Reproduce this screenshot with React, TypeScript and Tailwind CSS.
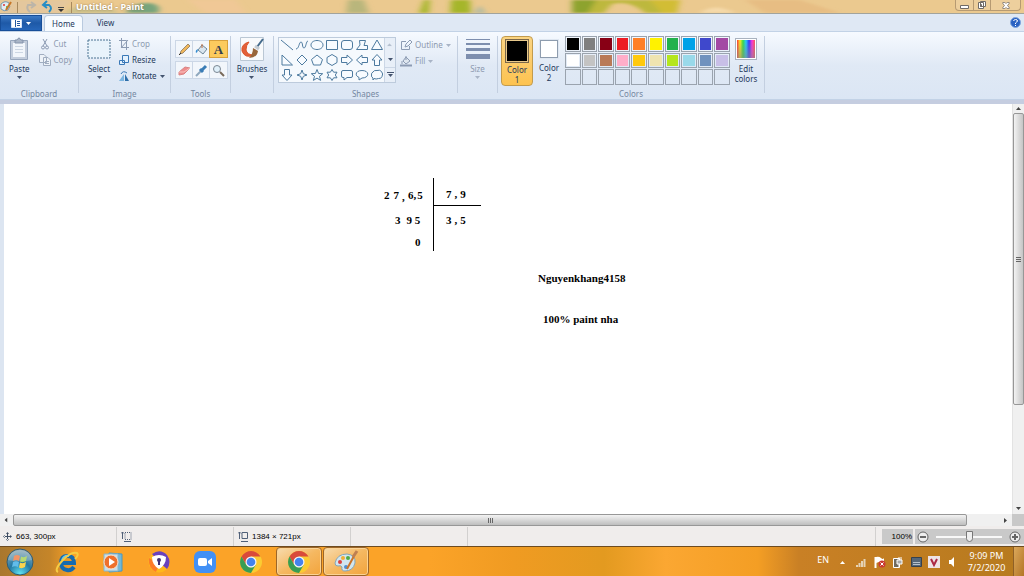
import type { ReactNode } from 'react';

const swatches = [
  '#000000', '#7f7f7f', '#880015', '#ed1c24', '#ff7f27', '#fff200', '#22b14c', '#00a2e8', '#3f48cc', '#a349a4',
  '#ffffff', '#c3c3c3', '#b97a57', '#ffaec9', '#ffc90e', '#efe4b0', '#b5e61d', '#99d9ea', '#7092be', '#c8bfe7',
];

// every outline is drawn on a 14x14 grid
const shapes = [
  { name: 'Line', d: 'M1 2L13 12' },
  { name: 'Curve', d: 'M1 11C4 11 4 4 6 4C8 4 7 10 9 10C11 10 11 3 13 3' },
  { name: 'Oval', d: 'M7 2.5C10.5 2.5 13 4.5 13 7S10.5 11.5 7 11.5S1 9.5 1 7S3.5 2.5 7 2.5Z' },
  { name: 'Rectangle', d: 'M1.5 2.5H12.5V11.5H1.5Z' },
  { name: 'Rounded rectangle', d: 'M4 2.5H10Q12.5 2.5 12.5 5V9Q12.5 11.5 10 11.5H4Q1.5 11.5 1.5 9V5Q1.5 2.5 4 2.5Z' },
  { name: 'Polygon', d: 'M4.5 2.5H10.5L9 7.5H12.5V11.5H1.5L5 7Z' },
  { name: 'Triangle', d: 'M7 2L12.5 11.5H1.5Z' },
  { name: 'Right triangle', d: 'M2 2V12H12.5Z' },
  { name: 'Diamond', d: 'M7 2L12 7L7 12L2 7Z' },
  { name: 'Pentagon', d: 'M7 2L12.5 6.5L10.5 12H3.5L1.5 6.5Z' },
  { name: 'Hexagon', d: 'M7 1.5L12 4.5V9.5L7 12.5L2 9.5V4.5Z' },
  { name: 'Right arrow', d: 'M1.5 4.5H7V2L12.5 7L7 12V9.5H1.5Z' },
  { name: 'Left arrow', d: 'M12.5 4.5H7V2L1.5 7L7 12V9.5H12.5Z' },
  { name: 'Up arrow', d: 'M4.5 12.5V7H2L7 1.5L12 7H9.5V12.5Z' },
  { name: 'Down arrow', d: 'M4.5 1.5V7H2L7 12.5L12 7H9.5V1.5Z' },
  { name: 'Four-point star', d: 'M7 2L8.3 5.7L12 7L8.3 8.3L7 12L5.7 8.3L2 7L5.7 5.7Z' },
  { name: 'Five-point star', d: 'M7 1.5L8.6 5.5L12.7 5.7L9.5 8.3L10.6 12.4L7 10.1L3.4 12.4L4.5 8.3L1.3 5.7L5.4 5.5Z' },
  { name: 'Six-point star', d: 'M7 1.5L8.6 4.2H12L10.3 7L12 9.8H8.6L7 12.5L5.4 9.8H2L3.7 7L2 4.2H5.4Z' },
  { name: 'Rounded callout', d: 'M3 2.5H11Q12.5 2.5 12.5 4V8Q12.5 9.5 11 9.5H7L4 12V9.5H3Q1.5 9.5 1.5 8V4Q1.5 2.5 3 2.5Z' },
  { name: 'Oval callout', d: 'M7 2.5C10.5 2.5 12.8 4 12.8 6.2S10.5 10 7 10L4 12V9.4C2.3 8.7 1.2 7.6 1.2 6.2C1.2 4 3.5 2.5 7 2.5Z' },
  { name: 'Cloud callout', d: 'M3 4Q4 2 7 2.5Q10 1.5 11.5 3.5Q13.5 6 12 8.5Q11 11 8.5 10.5Q6 11.5 4 10.5L3 12V10Q1 9 1.5 7Q1 5 3 4Z' },
];

function Arrow({ className = 'fill-[#44546f]' }: { className?: string }) {
  return (
    <svg width="5" height="3" viewBox="0 0 5 3" className={className}>
      <path d="M0 0H5L2.5 3Z" />
    </svg>
  );
}

function Group({ label, className, children }: { label?: string; className: string; children: ReactNode }) {
  return (
    <section className={`flex shrink-0 flex-col border-r border-[#c3cfe0] ${className}`}>
      <div className="flex h-[52px] shrink-0">{children}</div>
      <h2 className="h-3 text-center leading-3 text-[#7486a0]">{label}</h2>
    </section>
  );
}

function BigButton({ icon, label, muted }: { icon: ReactNode; label: string; muted?: boolean }) {
  return (
    <button className={`flex flex-col items-center self-start leading-[10px] ${muted ? 'text-[#8d9ab0]' : ''}`}>
      <span className="mb-[2px] flex h-[26px] items-center">{icon}</span>
      {label}
      <span className="mt-[2px] flex"><Arrow className={muted ? 'fill-[#a9b4c6]' : 'fill-[#44546f]'} /></span>
    </button>
  );
}

function SmallButton({ icon, label, muted, arrow }: { icon: ReactNode; label: string; muted?: boolean; arrow?: boolean }) {
  return (
    <button className={`flex h-4 items-center gap-[3px] ${muted ? 'text-[#8d9ab0]' : ''}`}>
      {icon}
      {label}
      {arrow && <Arrow className={muted ? 'fill-[#a9b4c6]' : 'fill-[#44546f]'} />}
    </button>
  );
}

function Tool({ name, active, children }: { name: string; active?: boolean; children: ReactNode }) {
  return (
    <button aria-label={name} className={`flex h-4 w-[17px] items-center justify-center ${active ? 'bg-[#fccb5e] outline outline-[#d8a13c]' : 'border-r border-[#ccd7e6] last:border-r-0'}`}>
      <svg width="13" height="13" viewBox="0 0 13 13" fill="none">{children}</svg>
    </button>
  );
}

function TitleBar() {
  return (
    <header className="relative flex h-[13px] overflow-hidden bg-[#ebc98f] text-[9px]">
      <svg className="absolute inset-0 h-full w-full" viewBox="0 0 1024 13" preserveAspectRatio="none">
        <defs>
          <filter id="soft" x="-20%" y="-50%" width="140%" height="200%"><feGaussianBlur stdDeviation="3 1" /></filter>
        </defs>
        <g filter="url(#soft)">
          <path d="M0 0H72L60 13H0Z" fill="#e4c79d" />
          <path d="M126 13Q132 2 150 3Q162 5 158 13Z" fill="#77a47c" />
          <path d="M64 13Q74 4 96 6Q116 8 118 13Z" fill="#ccc18c" />
          <path d="M188 0H235L246 13H205Z" fill="#f0c896" />
          <path d="M348 0H364L369 13H346Z" fill="#b9b67b" />
          <path d="M424 0H430L429 13H419Z" fill="#a8b72d" />
          <path d="M451 0H470L471 13H450Z" fill="#a5b62c" />
          <path d="M474 13L480 5L486 13Z" fill="#b5bba0" />
          <path d="M572 0H680L677 13H645Q630 0 612 4L604 13H572Z" fill="#bdb83c" />
          <path d="M572 0H596L588 13H572Z" fill="#8da32f" />
          <path d="M650 0H680L676 13H662Z" fill="#d2bd36" />
          <path d="M700 13Q715 2 735 13Z" fill="#f5d9a9" />
          <path d="M745 0H800L840 13H765Z" fill="#e7bd83" />
        </g>
      </svg>
      <div className="relative flex h-full flex-1 items-center">
        <svg width="76" height="13" viewBox="0 0 76 13" fill="none">
          <path d="M1 4Q5 0 9 3Q11 7 8 10Q4 12 1 9Z" fill="#e2ecf1" stroke="#7998aa" />
          <circle cx="4" cy="5" r="1" fill="#d33" /><circle cx="7" cy="7" r="1" fill="#3b3" />
          <path d="M6 10L11 2" stroke="#c77728" strokeWidth="2" />
          <path d="M17.5 2V13M71.5 2V13" stroke="#a7895d" />
          <path d="M34 5H28Q26 9 30 12M31 2L35 5L31 8" stroke="#bcb5a8" strokeWidth="2" />
          <path d="M43 5H49Q53 8 49 12M47 1L43 5L47 8" stroke="#278dc5" strokeWidth="2" />
          <path d="M58 7.5H64" stroke="#444" /><path d="M58 9H64L61 12Z" fill="#333" />
        </svg>
        <h1 className="font-bold leading-[13px] text-white [text-shadow:0_0_2px_#987345]">Untitled - Paint</h1>
      </div>
      <div className="relative mr-[3px] flex h-[11px] rounded-b-sm border border-t-0 border-[#b69a72] bg-[#edcf9d]">
        <button aria-label="Minimize" className="flex w-[18px] items-center justify-center border-r border-[#b69a72]">
          <svg width="9" height="7" viewBox="0 0 9 7"><path d="M.5 3.5H8.5V6.5H.5Z" fill="#fff" stroke="#706b67" /></svg>
        </button>
        <button aria-label="Restore" className="flex w-[17px] items-center justify-center border-r border-[#b69a72]">
          <svg width="8" height="8" viewBox="0 0 8 8" fill="#fff" stroke="#706b67"><path d="M2.5 .5H7.5V5.500H2.5ZM.5 1.500H5.500V7.500H.5ZM2.5 3.500H3.500V5.500H2.5Z" /></svg>
        </button>
        <button aria-label="Close" className="flex w-[29px] items-center justify-center">
          <svg width="8" height="7" viewBox="0 0 9 9"><path d="M.5 .5H3L4.5 2L6 .5H8.5V2L6.5 4.5L8.5 7V8.5H6L4.5 7L3 8.5H.5V7L2.5 4.5L.5 2Z" fill="#fff" stroke="#706b67" /></svg>
        </button>
      </div>
    </header>
  );
}

function Ribbon() {
  return (
    <div className="flex h-[69px] overflow-hidden border-y border-[#c2d2e6] bg-linear-to-b from-[#f6faff] via-[#e0e9f5] to-[#dbe6f4] pt-1 pb-[6px] text-[8px] text-[#1e395b]">
      <Group label="Clipboard" className="w-[79px]">
        <div className="flex gap-[9px] pl-[9px]">
          <BigButton
            label="Paste"
            icon={
              <svg width="20" height="24" viewBox="0 0 20 24" fill="none">
                <path d="M1.5 3.5H18.5V22.5H1.5Z" fill="#c3cddc" stroke="#98a7bd" />
                <path d="M4 6H16V20H4Z" fill="#f2f6fb" />
                <path d="M6 9.5H14M6 12.5H14M6 15.5H14" stroke="#ccd6e3" />
                <path d="M6 3H8Q10 -1 12 3H14V6H6Z" fill="#a9b5c7" stroke="#8493ab" />
              </svg>
            }
          />
          <div className="flex flex-col">
            <SmallButton muted label="Cut" icon={
              <svg width="12" height="12" viewBox="0 0 12 12" fill="none" stroke="#8c9bb3"><path d="M4 1L8 8M8 1L4 8" /><circle cx="4" cy="9.500" r="1.500" /><circle cx="8" cy="9.500" r="1.500" /></svg>
            } />
            <SmallButton muted label="Copy" icon={
              <svg width="12" height="12" viewBox="0 0 12 12" fill="#edf2f8" stroke="#a0adc0"><path d="M.5 .5H5L7.5 3V8.5H.5ZM4.5 3.5H9L11.5 6V11.5H4.5ZM6 7.5H10M6 9.5H10" /></svg>
            } />
          </div>
        </div>
      </Group>

      <Group label="Image" className="w-[92px]">
        <div className="flex gap-2 pl-[8px]">
          <BigButton label="Select" icon={
            <svg width="24" height="20" viewBox="0 0 24 20"><path d="M1 1H23V19H1Z" fill="#e8f3fb" stroke="#4a7291" strokeDasharray="2 1" /></svg>
          } />
          <div className="flex flex-col">
            <SmallButton muted label="Crop" icon={
              <svg width="10" height="12" viewBox="0 0 10 12" fill="none" stroke="#8c9bb3"><path d="M2.5 0V9.5H10M0 2.5H7.5V12M2 10L9 2" /></svg>
            } />
            <SmallButton label="Resize" icon={
              <svg width="10" height="12" viewBox="0 0 10 12" fill="#e4f1fd" stroke="#3a78b7"><path d="M3.5 1.5H9.5V8.5H3.5ZM.5 6.5H5.5V10.5H.5Z" /></svg>
            } />
            <SmallButton arrow label="Rotate" icon={
              <svg width="10" height="12" viewBox="0 0 10 12"><path d="M0 11H5V4Z" fill="#7cb5e0" /><path d="M6 4V11H10Z" fill="#2d6ea9" /><path d="M2 4Q4 0 8 3" fill="none" stroke="#3a78b7" /></svg>
            } />
          </div>
        </div>
      </Group>

      <Group label="Tools" className="w-[60px]">
        <div className="flex flex-col gap-[3px] pl-1 pt-1">
          <div className="flex border border-[#ccd7e6] bg-[#f2f6fb]">
            <Tool name="Pencil"><path d="M2 11L3 8L10 1L12 3L5 10Z" fill="#f0b75b" stroke="#a08a6b" /><path d="M1 12L3 10" stroke="#333" /></Tool>
            <Tool name="Fill with color"><path d="M3 7L7 2L12 6L8 11Z" fill="#d9e5ef" stroke="#6f8799" /><path d="M7 5V1" stroke="#c56f3e" /><path d="M3 6Q0 7 1 10Q3 9 3 6Z" fill="#318bd0" /></Tool>
            <Tool name="Text" active><text x="6.5" y="11" textAnchor="middle" className="fill-[#333e4f] font-['Liberation_Serif',serif] text-[13px] font-bold">A</text></Tool>
          </div>
          <div className="flex border border-[#ccd7e6] bg-[#f2f6fb]">
            <Tool name="Eraser"><path d="M1 8L7 3L12 4L6 10L1 11Z" fill="#ee8d8d" stroke="#d98484" /><path d="M1 8L6 8L12 4" stroke="#f8c3be" /></Tool>
            <Tool name="Color picker"><path d="M1 12L7 6" stroke="#8fa8bd" strokeWidth="2" /><path d="M5 5L8 8M7 6L11 2" stroke="#3a7cb5" strokeWidth="3" /></Tool>
            <Tool name="Magnifier"><circle cx="5" cy="5" r="3.5" fill="#e0f0fa" stroke="#7b8792" /><path d="M8 8L12 12" stroke="#786959" strokeWidth="2" /></Tool>
          </div>
        </div>
      </Group>

      <Group className="w-[43px]">
        <div className="flex flex-1 justify-center">
          <BigButton label="Brushes" icon={
            <svg width="24" height="24" viewBox="0 0 24 24" fill="none">
              <path d="M.5 .5H23.5V23.5H.5Z" fill="#f8fafc" stroke="#bac7d4" />
              <path d="M9 5Q1 7 2 14Q5 22 14 18Q7 18 6 13Q6 8 9 5Z" fill="#e2603a" stroke="#dc5429" />
              <path d="M17 10L23 2" stroke="#446b8c" strokeWidth="2" />
              <path d="M15 9L19 12" stroke="#c5ccd2" strokeWidth="3" />
              <path d="M13 11L18 14Q17 21 9 21Q13 17 13 11Z" fill="#97663b" />
            </svg>
          } />
        </div>
      </Group>

      <Group label="Shapes" className="w-[184px]">
        <div className="flex gap-1 pl-1 pt-px">
          <div className="flex h-[46px] w-[118px] border border-[#bdcbdc] bg-[#f5f9fd]">
            <div className="grid flex-1 grid-cols-7">
              {shapes.map((s) => (
                <button key={s.name} aria-label={s.name} className="flex items-center justify-center">
                  <svg width="14" height="14" viewBox="0 0 14 14" fill="#f7fbff" stroke="#4d7a9f"><path d={s.d} /></svg>
                </button>
              ))}
            </div>
            <div className="flex w-[11px] flex-col border-l border-[#ccd7e6] bg-[#e8eff8]">
              <button aria-label="Scroll shapes up" className="flex flex-1 rotate-180 items-center justify-center"><Arrow className="fill-[#b5c0cf]" /></button>
              <button aria-label="Scroll shapes down" className="flex flex-1 items-center justify-center"><Arrow /></button>
              <button aria-label="More shapes" className="flex flex-1 flex-col items-center justify-center gap-px border-t border-[#ccd7e6]"><span className="h-px w-[7px] bg-[#44546f]" /><Arrow /></button>
            </div>
          </div>
          <div className="flex flex-col">
            <SmallButton muted arrow label="Outline" icon={
              <svg width="12" height="12" viewBox="0 0 12 12" fill="none" stroke="#8c9bb3"><path d="M6 2.5H1.5V10.5H9.5V7M5 8L6 5L10 1L12 3L8 7Z" /></svg>
            } />
            <SmallButton muted arrow label="Fill" icon={
              <svg width="12" height="12" viewBox="0 0 12 12" fill="#dee6ef" stroke="#8c9bb3"><path d="M3 6L6 2L10 6L6 9Z" /><path d="M6 5V1M2 6V9" /><path d="M0 10.5H12" strokeWidth="2" /></svg>
            } />
          </div>
        </div>
      </Group>

      <Group className="w-[40px]">
        <div className="flex flex-1 justify-center">
          <BigButton muted label="Size" icon={
            <svg width="24" height="22" viewBox="0 0 24 22" fill="#7d8eae"><path d="M0 1H24V2H0ZM0 5H24V7H0ZM0 10H24V13H0ZM0 16H24V21H0Z" /></svg>
          } />
        </div>
      </Group>

      <Group label="Colors" className="w-[267px]">
        <div className="flex items-start pl-[3px] leading-[10px]">
          <button className="flex h-[50px] w-8 flex-col items-center rounded-sm border border-[#c29b4d] bg-linear-to-b from-[#fbd482] to-[#fdc34f] pt-[2px]">
            <span className="mb-[2px] flex size-6 border border-[#7b684a] bg-[#e8c98c] p-px"><span className="flex-1 bg-black" /></span>
            Color<br />1
          </button>
          <button className="flex w-8 flex-col items-center pt-1">
            <span className="mb-[5px] size-[18px] border border-[#8e9cae] bg-white outline outline-[#dfe7f1]" />
            Color<br />2
          </button>
          <div className="grid h-[49px] w-[165px] grid-cols-10 grid-rows-3 gap-px">
            {Array.from({ length: 30 }, (_, i) => (
              <button key={i} aria-label={swatches[i] ?? 'Empty custom color'} className="border border-[#9aa3ae] p-px">
                <span className="block h-full" style={{ backgroundColor: swatches[i] }} />
              </button>
            ))}
          </div>
          <button className="flex w-8 flex-col items-center pt-[2px]">
            <span className="mb-1 size-[22px] border border-[#a9b2bf] bg-white p-px">
              <span className="relative block h-full bg-[linear-gradient(90deg,#f33,#fe2,#3d4,#2cf,#33f,#f3d,#f55)]">
                <span className="absolute inset-0 bg-linear-to-b from-transparent to-[#888]/60" />
              </span>
            </span>
            Edit<br />colors
          </button>
        </div>
      </Group>
    </div>
  );
}

function Canvas() {
  return (
    <main className="flex flex-1 border-t-4 border-[#c5cde0]">
      <div className="w-1 bg-[#dce5f1]" />
      <div className="relative min-h-[240px] flex-1 overflow-hidden bg-white font-['Liberation_Serif',serif] text-[11px] font-bold leading-3 text-black">
        {/* long division sheet */}
        <p className="absolute left-[380px] top-[85px] flex gap-1"><span>2</span><span>7</span></p>
        <p className="absolute left-[398px] top-[87px]">,</p>
        <p className="absolute left-[404px] top-[85px] flex gap-px"><span>6,</span><span>5</span></p>
        <p className="absolute left-[442px] top-[84px] flex gap-[3px]"><span>7</span><span>,</span><span>9</span></p>
        <p className="absolute left-[391px] top-[110px] flex gap-[6px]"><span>3</span><span>9 5</span></p>
        <p className="absolute left-[442px] top-[110px] flex gap-[3px]"><span>3</span><span>,</span><span>5</span></p>
        <p className="absolute left-[411px] top-[132px]">0</p>
        <div className="absolute left-[429px] top-[74px] h-[73px] w-px bg-black" />
        <div className="absolute left-[429px] top-[101px] h-px w-[48px] bg-black" />
        <p className="absolute left-[534px] top-[168px]">Nguyenkhang4158</p>
        <p className="absolute left-[539px] top-[209px]">100% paint nha</p>
      </div>
      <div className="flex w-3 flex-col border-l border-[#e3e3e3] bg-[#f0f0f0]">
        <button aria-label="Scroll up" className="flex h-[9px] rotate-180 items-center justify-center"><Arrow className="fill-[#444]" /></button>
        <div className="flex flex-[3] items-center justify-center rounded-xs border border-[#979797] bg-linear-to-r from-[#f3f3f3] to-[#c5c5c5]">
          <svg width="5" height="7" viewBox="0 0 5 7" stroke="#666"><path d="M0 1.500H5M0 3.5H5M0 5.500H5" /></svg>
        </div>
        <div className="flex-1" />
        <button aria-label="Scroll down" className="flex h-3 items-center justify-center"><Arrow className="fill-[#444]" /></button>
      </div>
    </main>
  );
}

function HorizontalScroll() {
  return (
    <div className="flex h-3 bg-[#f0f0f0]">
      <button aria-label="Scroll left" className="flex w-[13px] rotate-90 items-center justify-center"><Arrow className="fill-[#444]" /></button>
      <div className="flex flex-1 items-center justify-center rounded-xs border border-[#979797] bg-linear-to-b from-[#f3f3f3] to-[#bebebe]">
        <svg width="7" height="5" viewBox="0 0 7 5" stroke="#666"><path d="M1.500 0V5M3.5 0V5M5.500 0V5" /></svg>
      </div>
      <button aria-label="Scroll right" className="flex w-[45px] items-center justify-end pr-1"><span className="flex -rotate-90"><Arrow className="fill-[#444]" /></span></button>
      <div className="w-3 bg-[#c8c8c8]" />
    </div>
  );
}

function StatusBar() {
  return (
    <footer className="flex h-5 items-stretch bg-[#f0edec] pt-px font-['Liberation_Sans',sans-serif] text-[8px] text-black">
      <div className="flex w-[117px] items-center gap-1 border-r border-[#d2d0cf] pl-[3px]">
        <svg width="9" height="9" viewBox="0 0 9 9" fill="#3f4e64"><path d="M4 1H5V4H8V5H5V8H4V5H1V4H4ZM3 2L4.500 0L6 2ZM3 7L4.500 9L6 7ZM2 3L0 4.500L2 6ZM7 3L9 4.500L7 6Z" /></svg>
        663, 300px
      </div>
      <div className="flex w-[117px] items-center border-r border-[#d2d0cf] pl-1">
        <svg width="11" height="11" viewBox="0 0 11 11" fill="none" stroke="#506078"><path d="M1.500 8V1M0 2.500L1.500 1L3 2.500M3 10.500H10" /><path d="M4 1.500H10V8.500H4Z" strokeDasharray="1 1" /></svg>
      </div>
      <div className="flex w-[117px] items-center gap-[3px] border-r border-[#d2d0cf] pl-1">
        <svg width="11" height="11" viewBox="0 0 11 11" fill="none" stroke="#506078"><path d="M1.500 8V1M0 2.500L1.500 1L3 2.500M4 1.500H9.500V7.500H4ZM3 10.500H10" /></svg>
        1384 × 721px
      </div>
      <div className="w-[117px] border-r border-[#d2d0cf]" />
      <div className="flex-1 border-r border-[#d2d0cf]" />
      <div className="ml-[6px] flex w-[142px] items-center bg-[#f0edec]">
        <span className="flex h-[15px] w-[31px] shrink-0 items-center justify-end bg-[#c9c9c9] pr-px">100%</span>
        <div className="ml-[2px] flex h-[15px] min-w-0 flex-1 items-center bg-[#c9c9c9] pl-[2px]">
          <button aria-label="Zoom out" className="shrink-0"><svg width="12" height="12" viewBox="0 0 12 12" fill="#eee" stroke="#666"><circle cx="6" cy="6" r="5" /><path d="M3 6H9" strokeWidth="2" /></svg></button>
          <input
            type="range"
            aria-label="Zoom"
            defaultValue={50}
            className="mx-[7px] h-3 min-w-0 flex-1 appearance-none bg-[linear-gradient(#f8f8f8,#f8f8f8)] bg-[length:100%_2px] bg-center bg-no-repeat [&::-webkit-slider-thumb]:h-[11px] [&::-webkit-slider-thumb]:w-[7px] [&::-webkit-slider-thumb]:appearance-none [&::-webkit-slider-thumb]:rounded-b-sm [&::-webkit-slider-thumb]:border [&::-webkit-slider-thumb]:border-[#777] [&::-webkit-slider-thumb]:bg-[#eee]"
          />
          <button aria-label="Zoom in" className="mr-[3px] shrink-0"><svg width="12" height="12" viewBox="0 0 12 12" fill="#eee" stroke="#666"><circle cx="6" cy="6" r="5" /><path d="M3 6H9M6 3V9" strokeWidth="2" /></svg></button>
        </div>
      </div>
    </footer>
  );
}

function ChromeIcon() {
  return (
    <svg width="24" height="24" viewBox="0 0 24 24">
      <circle cx="12" cy="12" r="11" fill="#fbcb32" />
      <path d="M2.500 6.500A11 11 0 0 1 21.500 6.500H12L7.200 14.800Z" fill="#d94a3a" />
      <path d="M2.500 6.500A11 11 0 0 0 12 23L16.800 14.800L12 17.500L7.200 14.800Z" fill="#389d54" />
      <circle cx="12" cy="12" r="5.500" fill="#f5f5f5" />
      <circle cx="12" cy="12" r="4.300" fill="#4483ee" />
    </svg>
  );
}

function TaskButton({ name, open, children }: { name: string; open?: boolean; children: ReactNode }) {
  return (
    <button aria-label={name} className={`flex w-[46px] items-center justify-center ${open ? 'rounded-sm border border-[#9d6629] bg-linear-to-br from-[#f7dcae] via-[#f5b861] to-[#f2a43a] shadow-[inset_0_0_0_1px_#fbd393]' : ''}`}>
      {children}
    </button>
  );
}

function Taskbar() {
  return (
    <nav className="flex h-[30px] overflow-hidden border-t border-[#6d4b20] bg-[linear-gradient(90deg,#a9772d_0,#c58529_50px,#fba328_75px,#fba328_42%,#f09b22_50%,#e39a20_59%,#fba732_65%,#f49e24_74%,#c98025_78%,#b67a1e)]">
      <button aria-label="Start" className="flex w-[44px] justify-center pr-1 pt-px">
        <svg width="28" height="28" viewBox="0 0 28 28">
          <defs>
            <radialGradient id="orb" cx=".5" cy=".95" r=".9"><stop offset="0" stopColor="#5fe4f3" /><stop offset=".5" stopColor="#2479a4" /><stop offset="1" stopColor="#8ba7b3" /></radialGradient>
          </defs>
          <circle cx="14" cy="14" r="13" fill="url(#orb)" stroke="#315b70" />
          <path d="M8 8Q11 6 14 8L13 13Q10 11 7 13Z" fill="#f1763c" />
          <path d="M15 8.500Q18 10 21 8L20 13Q17 15 14 13.500Z" fill="#a3cf4c" />
          <path d="M7 14Q10 12.500 13 14L12 19Q9 17.500 6 19Z" fill="#61bcea" />
          <path d="M14 14.500Q17 16 20 14L19 19Q16 21 13 19.500Z" fill="#fdd34e" />
          <path d="M2 12Q4 2 14 2T26 12Q14 15 2 12Z" fill="#fff" opacity=".22" />
        </svg>
      </button>
      <TaskButton name="Internet Explorer">
        <svg width="24" height="24" viewBox="0 0 24 24" fill="none">
          <path d="M19 17Q16 21 12 20Q6 19 6 13Q6 6 12.500 6Q19 6 19 13H8" stroke="#176bae" strokeWidth="4" />
          <path d="M7 10Q9 5 14 6" stroke="#6ac6ef" strokeWidth="2" />
          <path d="M3 22Q-1 20 7 11Q16 1 22 3Q24 5 20 9" stroke="#f6cc43" strokeWidth="2" />
        </svg>
      </TaskButton>
      <TaskButton name="Media Player">
        <svg width="22" height="22" viewBox="0 0 22 22">
          <path d="M7 2L20 3V20L7 21Z" fill="#71b8d8" stroke="#4d97ba" /><path d="M2 3H16V20H2Z" fill="#c5dfeb" stroke="#8ab4c8" />
          <circle cx="9" cy="11" r="7" fill="#ee702b" stroke="#fae2cd" /><path d="M7 7L13 11L7 15Z" fill="#fff" />
        </svg>
      </TaskButton>
      <TaskButton name="Secure Browser">
        <svg width="24" height="24" viewBox="0 0 24 24">
          <circle cx="12" cy="12" r="10.500" fill="#ffb81c" />
          <path d="M5 4Q13 -2 20 5Q25 12 20 19L12 12Z" fill="#6942bd" />
          <path d="M2 8Q1 18 9 22L12 14Z" fill="#fd7b2a" />
          <path d="M5 7Q12 3 19 7Q19 15 12 19Q5 15 5 7Z" fill="#fff" />
          <circle cx="12" cy="10" r="2" fill="#403178" /><path d="M11 10H13V15H11Z" fill="#403178" />
        </svg>
      </TaskButton>
      <TaskButton name="Zoom">
        <svg width="24" height="24" viewBox="0 0 24 24" fill="#fff"><rect x="1" y="1" width="22" height="22" rx="6" fill="#4290f5" /><rect x="5" y="8" width="9" height="8" rx="2" /><path d="M15 11L19 8V16L15 13Z" /></svg>
      </TaskButton>
      <TaskButton name="Chrome"><ChromeIcon /></TaskButton>
      <div className="flex gap-px pl-[2px]">
        <TaskButton name="Chrome window" open><ChromeIcon /></TaskButton>
        <TaskButton name="Paint window" open>
          <svg width="26" height="24" viewBox="0 0 26 24">
            <path d="M2 13Q4 4 14 4Q23 5 22 13Q20 21 12 21Q8 21 9 17Q8 15 5 16Q2 16 2 13Z" fill="#d2e6ef" stroke="#84a6b9" />
            <circle cx="7" cy="12" r="2" fill="#db4141" /><circle cx="10" cy="8" r="2" fill="#f1ae35" /><circle cx="15" cy="8" r="2" fill="#52aa46" /><circle cx="13" cy="17" r="2" fill="#4e8ed2" />
            <path d="M14 19L21 6" stroke="#cc7427" strokeWidth="2" /><path d="M20 7L24 1" stroke="#bf8052" strokeWidth="3" />
          </svg>
        </TaskButton>
      </div>
      <div className="ml-auto flex items-center text-[9px] text-white">
        <span className="mr-[10px] pb-1">EN</span>
        <svg width="120" height="14" viewBox="0 0 120 14" fill="none">
          <path d="M1 9H6L3.500 6Z" fill="#fff" />
          <path d="M18 12V10M20.500 12V8M23 12V6M25.500 12V4" stroke="#e5d3b6" strokeWidth="2" />
          <path d="M36.500 2V13" stroke="#fff" strokeWidth="2" /><path d="M37 2Q40 1 42 3T45 3V8Q42 9 40 7L37 8Z" fill="#fff" /><circle cx="43" cy="9" r="3.500" fill="#cb3a32" /><path d="M41.500 7.500L44.500 10.500M44.500 7.500L41.500 10.500" stroke="#fff" />
          <path d="M54.500 3.500H60.500V12.500H54.500Z" fill="#706a60" stroke="#fff" /><path d="M58 5H63V9H58ZM60 9V12M60 2V5M62 2V5" stroke="#fff" fill="#aaa" />
          <path d="M72.500 2.500H82.500V11.500H72.500Z" fill="#566779" stroke="#35414e" /><path d="M74 7.500H81M74 9.500H81" stroke="#b6c1cb" />
          <path d="M89 1H101V13H89Z" fill="#eee3e6" /><path d="M92 4L95 10L98 4" stroke="#ac2946" strokeWidth="2" />
          <path d="M110 5H112L115 2V12L112 9H110Z" fill="#fff" />
        </svg>
        <time className="w-[54px] pl-px text-center leading-3">9:09 PM<br />7/2/2020</time>
        <button aria-label="Show desktop" className="h-full w-[11px] border-l border-[#8f6026] bg-linear-to-br from-[#dba85a] to-[#b37523]" />
      </div>
    </nav>
  );
}

export default function App() {
  return (
    <div className="flex min-h-screen flex-col overflow-hidden bg-[#dfe8f4] font-['Noto_Sans',sans-serif]">
      <TitleBar />
      <div className="flex h-[18px] border-t border-[#a2a39b] bg-[#dfe8f4] text-[8px] text-[#1e395b]">
        <button aria-label="Paint menu" className="mt-px flex w-[42px] items-center justify-center gap-1 border border-[#174e99] bg-linear-to-b from-[#3c7ac5] via-[#1e59a7] to-[#2666b9]">
          <svg width="11" height="9" viewBox="0 0 11 9"><path d="M.5 .5H10.500V8.500H.5Z" fill="#fff" stroke="#d4e5fa" /><path d="M4.500 1V8M6 2.500H9M6 4.500H9M6 6.500H9" stroke="#2459a1" /></svg>
          <Arrow className="fill-white" />
        </button>
        <button className="mt-px ml-[2px] w-[39px] rounded-t-sm border border-b-0 border-[#b9cadf] bg-[#f7fbff]">Home</button>
        <button className="mt-px w-[45px]">View</button>
        <button aria-label="Help" className="ml-auto mr-[3px]">
          <svg width="11" height="11" viewBox="0 0 11 11" fill="none"><circle cx="5.500" cy="5.500" r="5" fill="#2a62c2" stroke="#80a6df" /><path d="M3.500 4Q4 2.500 5.500 2.500Q7.500 2.500 7.500 4Q7 5 5.500 6V7M5.500 8V9" stroke="#fff" /></svg>
        </button>
      </div>
      <Ribbon />
      <Canvas />
      <HorizontalScroll />
      <StatusBar />
      <Taskbar />
    </div>
  );
}
